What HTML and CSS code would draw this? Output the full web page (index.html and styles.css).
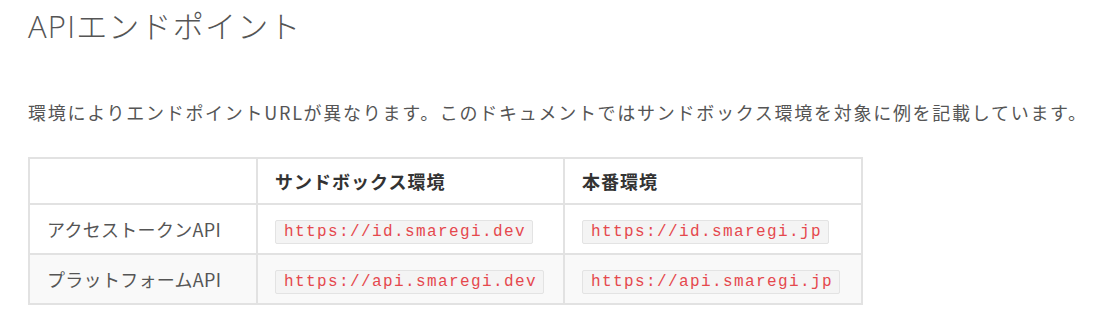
FILE: index.html
```html
<!DOCTYPE html>
<html lang="ja">
<head>
<meta charset="utf-8">
<link rel="stylesheet" href="styles.css">
</head>
<body>
<main class="page">
  <h1 class="title">APIエンドポイント</h1>
  <p class="lead">環境によりエンドポイントURLが異なります。このドキュメントではサンドボックス環境を対象に例を記載しています。</p>
  <table class="endpoints">
    <thead>
      <tr><th class="c1"></th><th class="c2">サンドボックス環境</th><th class="c3">本番環境</th></tr>
    </thead>
    <tbody>
      <tr><td>アクセストークンAPI</td><td><code>https://id.smaregi.dev</code></td><td><code>https://id.smaregi.jp</code></td></tr>
      <tr class="alt"><td>プラットフォームAPI</td><td><code>https://api.smaregi.dev</code></td><td><code>https://api.smaregi.jp</code></td></tr>
    </tbody>
  </table>
</main>
</body>
</html>
```

FILE: styles.css
```css
html, body {
  margin: 0;
  padding: 0;
  background: #fff;
}
.page {
  padding: 6px 0 0 28px;
  font-family: "Noto Sans CJK JP", "Noto Sans", sans-serif;
  color: #555;
}
.title {
  margin: 0;
  font-family: "Open Sans", "Noto Sans CJK JP", sans-serif;
  font-weight: 300;
  font-size: 31px;
  line-height: 40px;
  letter-spacing: 1.2px;
  color: #555;
}
.lead {
  margin: 53px 0 0 0;
  font-size: 18px;
  line-height: 26px;
  letter-spacing: 1.72px;
  font-weight: 400;
  color: #555;
}
.endpoints {
  margin-top: 32px;
  border-collapse: collapse;
  table-layout: fixed;
  width: 833px;
  font-size: 18px;
}
.endpoints th, .endpoints td {
  border: 2px solid #e2e2e2;
  padding: 0 17px;
  text-align: left;
  height: 46px;
  vertical-align: middle;
  white-space: nowrap;
}
.endpoints th {
  color: #333;
  font-weight: 700;
  letter-spacing: 1px;
}
.endpoints td {
  height: 48px;
  color: #555;
  letter-spacing: 0.3px;
}
.c1 { width: 228px; }
.c2 { width: 307px; }
.c3 { width: 298px; }
.endpoints th.c1, .endpoints th.c2, .endpoints th.c3 { box-sizing: border-box; }
.alt td { background: #f9f9f9; }
code {
  display: inline-block;
  font-family: "Liberation Mono", "Courier New", monospace;
  font-size: 16px;
  letter-spacing: 1.4px;
  color: #e5484d;
  background: #f4f4f4;
  border: 1px solid #e3e3e3;
  border-radius: 2px;
  padding: 1px 6px 1px 8px;
  line-height: 20px;
}
```
